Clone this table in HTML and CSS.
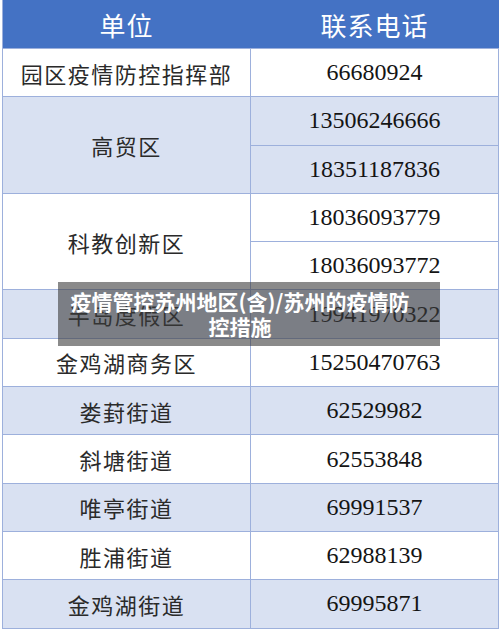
FILE: index.html
```html
<!DOCTYPE html>
<html lang="zh">
<head>
<meta charset="utf-8">
<link rel="stylesheet" href="styles.css">
</head>
<body>
<div class="page">
  <table class="contacts">
    <thead>
      <tr><th>单位</th><th>联系电话</th></tr>
    </thead>
    <tbody>
      <tr class="white"><td class="unit">园区疫情防控指挥部</td><td class="num">66680924</td></tr>
      <tr class="blue"><td class="unit" rowspan="2">高贸区</td><td class="num">13506246666</td></tr>
      <tr class="blue"><td class="num">18351187836</td></tr>
      <tr class="white"><td class="unit" rowspan="2">科教创新区</td><td class="num">18036093779</td></tr>
      <tr class="white"><td class="num">18036093772</td></tr>
      <tr class="blue"><td class="unit">半岛度假区</td><td class="num">19941970322</td></tr>
      <tr class="white"><td class="unit">金鸡湖商务区</td><td class="num">15250470763</td></tr>
      <tr class="blue"><td class="unit">娄葑街道</td><td class="num">62529982</td></tr>
      <tr class="white"><td class="unit">斜塘街道</td><td class="num">62553848</td></tr>
      <tr class="blue"><td class="unit">唯亭街道</td><td class="num">69991537</td></tr>
      <tr class="white"><td class="unit">胜浦街道</td><td class="num">62988139</td></tr>
      <tr class="blue"><td class="unit">金鸡湖街道</td><td class="num">69995871</td></tr>
    </tbody>
  </table>
  <div class="caption">疫情管控苏州地区(含)/苏州的疫情防<br>控措施</div>
</div>
</body>
</html>
```
FILE: styles.css
```css
html, body {
  margin: 0;
  padding: 0;
  background: #ffffff;
}
.page {
  position: relative;
  width: 500px;
  height: 630px;
  overflow: hidden;
}
.contacts {
  margin: 0 0 0 2px;
  width: 497px;
  border-collapse: collapse;
  table-layout: fixed;
}
.contacts th,
.contacts td {
  border: 1px solid #9db0dc;
  text-align: center;
  vertical-align: middle;
  padding: 0;
}
.contacts th {
  background: #4472c4;
  color: #ffffff;
  height: 48px;
  font-family: "Noto Sans CJK SC", sans-serif;
  font-weight: 400;
  font-size: 26px;
  letter-spacing: 1px;
  border-top: none;
  border-color: #4472c4 #4472c4 #9db0dc #9db0dc;
}
.contacts tbody tr {
  height: 48.3px;
}
.contacts tr.blue td {
  background: #d9e1f2;
}
.contacts tr.white td {
  background: #ffffff;
}
.unit {
  font-family: "Noto Sans CJK SC", sans-serif;
  font-weight: 400;
  font-size: 22px;
  letter-spacing: 1.5px;
  color: #2a2a2a;
}
.num {
  font-family: "Liberation Serif", serif;
  font-size: 24px;
  color: #141414;
}
.caption {
  position: absolute;
  left: 58px;
  top: 282px;
  width: 382px;
  height: 64px;
  box-sizing: border-box;
  padding: 7px 18px 0 0;
  background: rgba(60, 60, 60, 0.6);
  color: #ffffff;
  font-family: "Noto Sans CJK SC", sans-serif;
  font-weight: 700;
  font-size: 21px;
  line-height: 25px;
  text-align: center;
}
```
